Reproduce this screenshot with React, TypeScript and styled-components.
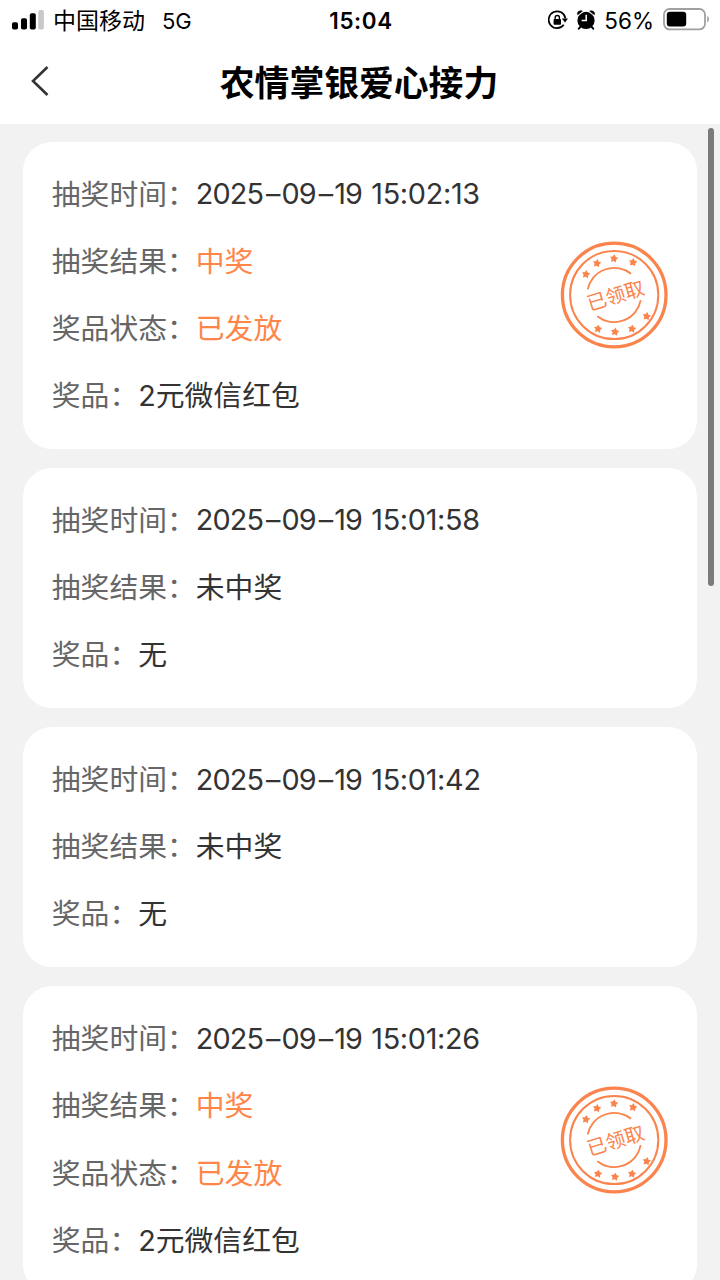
import { Fragment } from 'react';
import styled, { createGlobalStyle } from 'styled-components';

interface DrawRecord {
  date: string;
  time: string;
  won: boolean;
  status?: string;
  prize: string;
}

const records: DrawRecord[] = [
  { date: '2025-09-19', time: '15:02:13', won: true, status: '已发放', prize: '2元微信红包' },
  { date: '2025-09-19', time: '15:01:58', won: false, prize: '无' },
  { date: '2025-09-19', time: '15:01:42', won: false, prize: '无' },
  { date: '2025-09-19', time: '15:01:26', won: true, status: '已发放', prize: '2元微信红包' },
];

const STARS = [
  [26, 33.2],
  [37, 22.2],
  [54, 17.5],
  [73, 21.2],
  [86.7, 75.2],
  [72, 87.8],
  [55, 90.8],
  [38, 87.8],
];

const SignalIcon = () => (
  <svg width="32" height="20" viewBox="0 0 32 20">
    <rect x="0" y="12.2" width="6" height="7.3" rx="1.8" />
    <rect x="9" y="8.3" width="6" height="11.2" rx="1.8" />
    <rect x="17.8" y="3.3" width="6" height="16.2" rx="1.8" />
    <rect x="26.3" y="0" width="5.6" height="19.5" rx="1.8" fill="#c9c9c9" />
  </svg>
);

const RotationLockIcon = () => (
  <svg width="20" height="20" viewBox="0 0 20 20">
    <path d="M15.8 14.8 A8.4 8.4 0 1 1 17.4 8.4" fill="none" stroke="#000" strokeWidth="1.7" />
    <path d="M13.8 8.4 H20 L17 12.6 Z" />
    <rect x="5.6" y="9" width="7.4" height="5.8" rx="0.8" />
    <path d="M7.2 9.2 V7.6 A2.1 2.1 0 0 1 11.4 7.6 V9.2" fill="none" stroke="#000" strokeWidth="1.4" />
  </svg>
);

const AlarmIcon = () => (
  <svg width="18" height="20" viewBox="0 0 18 20">
    <circle cx="9" cy="10.4" r="8.6" />
    <path
      d="M0.6 4.8 C-0.2 1.8 2.6 0 5.4 1.2 Z M17.4 4.8 C18.2 1.8 15.4 0 12.6 1.2 Z"
      stroke="#000"
      strokeWidth="0.6"
    />
    <path d="M3.6 16.6 L1.8 18.7 M14.4 16.6 L16.2 18.7" stroke="#000" strokeWidth="2" strokeLinecap="round" />
    <path d="M0.8 6.2 L6.2 1.6 M17.2 6.2 L11.8 1.6" stroke="#fff" strokeWidth="0.7" />
    <path d="M9.2 4.8 V10.6 H4.6" fill="none" stroke="#fff" strokeWidth="1.5" />
  </svg>
);

const BatteryIcon = () => (
  <svg width="47" height="23" viewBox="0 0 47 23">
    <rect x="1" y="1" width="41" height="20.4" rx="5.6" fill="none" stroke="#a0a0a0" strokeWidth="1.8" />
    <rect x="3.8" y="3.8" width="19.4" height="14.6" rx="3" />
    <path d="M44.2 8 C46.6 9 46.6 13.4 44.2 14.4 Z" fill="#a0a0a0" />
  </svg>
);

const BackIcon = () => (
  <svg width="20" height="32" viewBox="0 0 20 32">
    <path d="M17.5 2 L3 16 L17.5 30" fill="none" stroke="#333" strokeWidth="2.6" />
  </svg>
);

const ReceivedStamp = () => (
  <StampSvg viewBox="0 0 108 108">
    <circle cx="54.2" cy="54" r="51.8" strokeWidth="3.3" />
    <circle cx="54.2" cy="54" r="44.1" strokeWidth="2" />
    <path d="M27.7 48.4 A27 27 0 0 1 71 32.8" strokeWidth="1.8" />
    <path d="M37.3 75.2 A27 27 0 0 0 80.7 59.2" strokeWidth="1.8" />
    {STARS.map(([x, y]) => (
      <polygon
        key={`${x}-${y}`}
        transform={`translate(${x} ${y}) rotate(8)`}
        points="0,-4.2 1.5,-1.8 4.2,-1.3 2.3,0.9 2.6,3.6 0,2.6 -2.6,3.6 -2.3,0.9 -4.2,-1.3 -1.5,-1.8"
      />
    ))}
    <text x="55.3" y="61.8" transform="rotate(-17 55.3 54.2)">
      已领取
    </text>
  </StampSvg>
);

const DrawTime = ({ date, time }: { date: string; time: string }) => (
  <Time>
    {date.split('-').map((part, index) => (
      <Fragment key={index}>
        {index > 0 && <Dash>–</Dash>}
        {part}
      </Fragment>
    ))}{' '}
    <Hours>{time}</Hours>
  </Time>
);

export default function App() {
  return (
    <Page>
      <GlobalStyle />
      <StatusBar>
        <StatusGroup>
          <SignalIcon />
          <Carrier>中国移动</Carrier>
          <Network>5G</Network>
        </StatusGroup>
        <Clock>15:04</Clock>
        <StatusGroup $end>
          <RotationLockIcon />
          <AlarmIcon />
          <Percent>56%</Percent>
          <BatteryIcon />
        </StatusGroup>
      </StatusBar>
      <TitleBar>
        <BackButton aria-label="返回">
          <BackIcon />
        </BackButton>
        <Title>农情掌银爱心接力</Title>
      </TitleBar>
      <RecordList>
        {records.map((record) => (
          <Card key={record.time}>
            <Fields>
              <Row>
                <Label>抽奖时间：</Label>
                <DrawTime date={record.date} time={record.time} />
              </Row>
              <Row>
                <Label>抽奖结果：</Label>
                <Value $highlight={record.won}>{record.won ? '中奖' : '未中奖'}</Value>
              </Row>
              {record.status && (
                <Row>
                  <Label>奖品状态：</Label>
                  <Value $highlight>{record.status}</Value>
                </Row>
              )}
              <Row>
                <Label>奖品：</Label>
                <Value>{record.prize}</Value>
              </Row>
            </Fields>
            {record.won && <ReceivedStamp />}
          </Card>
        ))}
        <ScrollThumb />
      </RecordList>
    </Page>
  );
}

const GlobalStyle = createGlobalStyle`
  * {
    box-sizing: border-box;
  }
  body {
    margin: 0;
    overflow: hidden;
    background: #f2f2f2;
    font-family: Inter, 'Noto Sans CJK SC', sans-serif;
  }
  svg {
    display: block;
    flex-shrink: 0;
  }
`;

const Page = styled.div`
  width: 720px;
  height: 1280px;
  display: flex;
  flex-direction: column;
  overflow: hidden;
`;

const StatusBar = styled.header`
  height: 40px;
  flex-shrink: 0;
  display: grid;
  grid-template-columns: 1fr auto 1fr;
  align-items: center;
  padding: 0 10px 2px 12px;
  background: #fff;
  color: #000;
`;

const StatusGroup = styled.div<{ $end?: boolean }>`
  display: flex;
  align-items: center;
  justify-content: ${({ $end }) => ($end ? 'flex-end' : 'flex-start')};
  gap: 9px;
`;

const Carrier = styled.span`
  padding-top: 3px;
  font-size: 23px;
  line-height: 36px;
`;

const Network = styled.span`
  margin-left: 8px;
  padding-top: 2px;
  font-size: 22px;
  line-height: 36px;
`;

const Clock = styled.span`
  padding-top: 2px;
  font-size: 22.4px;
  font-weight: 600;
  letter-spacing: 0.6px;
`;

const Percent = styled.span`
  padding-top: 2px;
  font-size: 22.5px;
`;

const TitleBar = styled.nav`
  height: 84px;
  flex-shrink: 0;
  display: grid;
  grid-template-columns: 80px 1fr 80px;
  align-items: center;
  padding-bottom: 2px;
  background: #fff;
`;

const BackButton = styled.button`
  padding: 0 0 0 30px;
  border: none;
  background: none;
`;

const Title = styled.h1`
  margin: 0;
  padding: 3px 2px 0 0;
  font-size: 34.8px;
  font-weight: 700;
  line-height: 50px;
  text-align: center;
  color: #000;
`;

const RecordList = styled.main`
  position: relative;
  flex: 1;
  min-height: 0;
  display: flex;
  flex-direction: column;
  gap: 19.2px;
  padding: 17.8px 23px 0;
  background: #f2f2f2;
`;

const Card = styled.section`
  flex-shrink: 0;
  display: flex;
  align-items: center;
  justify-content: space-between;
  padding: 19.2px 28.8px;
  border-radius: 28.8px;
  background: #fff;
`;

const Fields = styled.div`
  display: flex;
  flex-direction: column;
`;

const Row = styled.div`
  height: 67.2px;
  display: flex;
  align-items: center;
  font-size: 28.8px;
  line-height: 64px;
`;

const Label = styled.span`
  color: #666;
`;

const Value = styled.span<{ $highlight?: boolean }>`
  color: ${({ $highlight }) => ($highlight ? '#ff8549' : '#333')};
`;

const Time = styled(Value)`
  padding-bottom: 1px;
  letter-spacing: -0.9px;
  word-spacing: 2px;
`;

const Dash = styled.span`
  margin: 0 2px 0 3px;
`;

const Hours = styled.span`
  letter-spacing: -0.3px;
`;

const StampSvg = styled.svg`
  width: 108px;
  height: 108px;
  fill: none;
  stroke: #fb834c;
  polygon {
    fill: #fb834c;
    stroke: none;
  }
  text {
    fill: #fb834c;
    stroke: none;
    font-size: 19.6px;
    text-anchor: middle;
  }
`;

const ScrollThumb = styled.div`
  position: absolute;
  top: 4px;
  right: 6px;
  width: 6px;
  height: 458px;
  border-radius: 3px;
  background: #7b7b7b;
`;
